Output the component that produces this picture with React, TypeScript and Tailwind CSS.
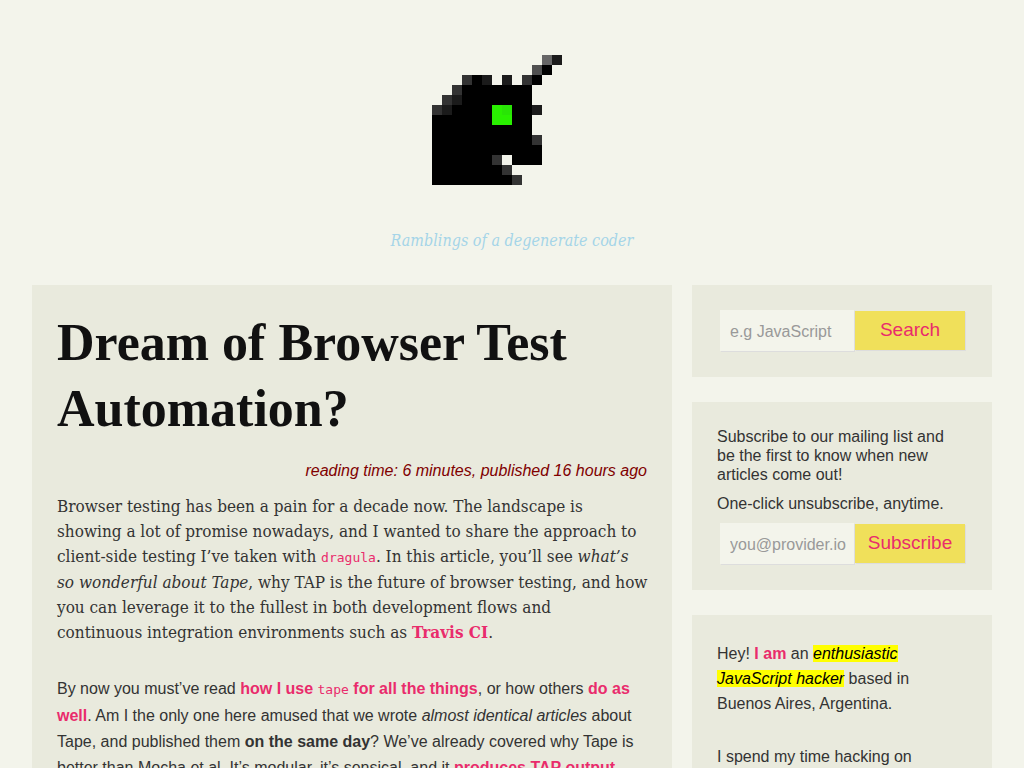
import type { ReactNode } from 'react';

const SHADES: Record<string, string> = {
  k: '#000000',
  d: '#1b1b1b',
  g: '#333333',
  m: '#505050',
  l: '#666666',
  n: '#29f000',
  e: '#29e406',
};

const UNICORN = [
  '...........ld',
  '..........mk.',
  '...gkd.d.gk..',
  '..gkkkkkkk...',
  '.gdkkkkkkk...',
  'gdkkkknekkd..',
  'kkkkkknnkk...',
  'kkkkkkkkkk...',
  'kkkkkkkkkkg..',
  'kkkkkkkkkkk..',
  'kkkkkkg.kkk..',
  'kkkkkkkg.....',
  'kkkkkkkkg....',
];

function Logo() {
  return (
    <svg viewBox="0 0 16 13" className="h-[130px] w-40" shapeRendering="crispEdges" aria-hidden="true">
      {UNICORN.flatMap((row, y) =>
        [...row].map((cell, x) =>
          cell === '.' ? null : <rect key={`${x}-${y}`} x={x} y={y} width={1} height={1} fill={SHADES[cell]} />,
        ),
      )}
    </svg>
  );
}

function Panel({ children }: { children: ReactNode }) {
  return <section className="bg-[#e9eadd] p-[25px]">{children}</section>;
}

function PinkLink({ children }: { children: ReactNode }) {
  return (
    <a href="#" className="font-bold text-[#e92c6c]">
      {children}
    </a>
  );
}

function Code({ children }: { children: ReactNode }) {
  return (
    <code className="font-['DejaVu_Sans_Mono',monospace] text-[13px] font-normal text-[#e92c6c]">{children}</code>
  );
}

function InlineForm({ id, type, label, placeholder, action }: {
  id: string;
  type: string;
  label: string;
  placeholder: string;
  action: string;
}) {
  return (
    <form className="mr-[2px] ml-[3px] flex items-center pb-px" onSubmit={(event) => event.preventDefault()}>
      <input
        id={id}
        type={type}
        aria-label={label}
        placeholder={placeholder}
        className="h-[41px] min-w-0 flex-1 bg-[#f3f4eb] pt-0.5 pl-2.5 text-base shadow-[1px_1px_0_#dddddd] outline-none placeholder:text-[#999999]"
      />
      <button
        type="submit"
        className="ml-px h-[39px] w-[110px] bg-[#f0e05a] text-[19px] text-[#e92c6c] shadow-[1px_1px_0_#dddddd]"
      >
        {action}
      </button>
    </form>
  );
}

export default function App() {
  return (
    <div className="min-h-screen bg-[#f3f4eb] font-['Liberation_Sans',Arial,sans-serif] text-base text-[#333333]">
      <header className="flex flex-col items-center pt-[55px]">
        <a href="#" aria-label="Home">
          <Logo />
        </a>
        <p className="mt-11 mb-8 font-['DejaVu_Serif_Condensed','DejaVu_Serif',serif] text-base leading-6 text-[#a5d5e8] italic">
          Ramblings of a degenerate coder
        </p>
      </header>

      <div className="grid grid-cols-[1fr_300px] items-start gap-5 px-8">
        <main>
          <Panel>
            <article>
              <h1 className="font-['Liberation_Serif','Times_New_Roman',serif] text-[52px] leading-[66px] font-bold text-[#111111]">
                Dream of Browser Test Automation?
              </h1>
              <p className="mt-[18px] text-right leading-[22px] text-[#800000] italic">
                reading time: 6 minutes, published 16 hours ago
              </p>
              <p className="mt-3 -mr-2 font-['DejaVu_Serif_Condensed','DejaVu_Serif',serif] text-[17px] leading-[25px]">
                Browser testing has been a pain for a decade now. The landscape is
                <br />
                showing a lot of promise nowadays, and I wanted to share the approach to client-side testing I’ve taken
                with <Code>dragula</Code>. In this article, you’ll see{' '}
                <em>
                  what’s
                  <br />
                  so wonderful about Tape
                </em>
                , why TAP is the future of browser testing, and how you can leverage it to the fullest in both
                development flows and
                <br />
                continuous integration environments such as <PinkLink>Travis CI</PinkLink>.
              </p>
              <p className="mt-[31px] leading-[26px]">
                By now you must’ve read{' '}
                <PinkLink>
                  how I use <Code>tape</Code> for all the things
                </PinkLink>
                , or how others <PinkLink>do as well</PinkLink>. Am I the only one here amused that we wrote{' '}
                <em>almost identical articles</em> about Tape, and published them <strong>on the same day</strong>?
                We’ve already covered why Tape is better than Mocha et al. It’s modular, it’s sensical, and it{' '}
                <PinkLink>produces TAP output</PinkLink>.
              </p>
            </article>
          </Panel>
        </main>

        <aside className="flex flex-col gap-[25px]">
          <Panel>
            <InlineForm id="search" type="text" label="Search articles" placeholder="e.g JavaScript" action="Search" />
          </Panel>
          <Panel>
            <p className="pr-5 leading-[19px]">
              Subscribe to our mailing list and be the first to know when new articles come out!
            </p>
            <p className="my-2.5 leading-[19px]">One-click unsubscribe, anytime.</p>
            <InlineForm
              id="email"
              type="email"
              label="Email address"
              placeholder="you@provider.io"
              action="Subscribe"
            />
          </Panel>
          <Panel>
            <p className="pt-px leading-[25px]">
              Hey! <PinkLink>I am</PinkLink> an{' '}
              <mark className="bg-[#ffff00] text-black italic">enthusiastic JavaScript hacker</mark> based in Buenos
              Aires, Argentina.
            </p>
            <p className="mt-7 leading-[25px]">I spend my time hacking on</p>
          </Panel>
        </aside>
      </div>
    </div>
  );
}
